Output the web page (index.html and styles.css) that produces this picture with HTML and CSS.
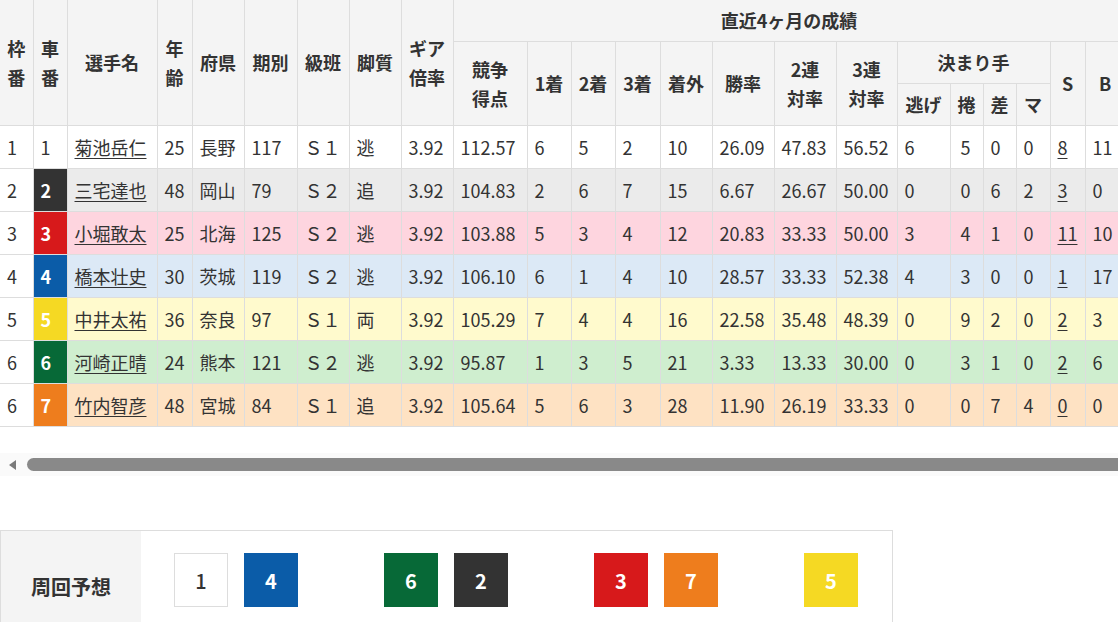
FILE: index.html
```html
<!DOCTYPE html>
<html lang="ja">
<head>
<meta charset="utf-8">
<title>出走表</title>
<link rel="stylesheet" href="styles.css">
</head>
<body>
<div class="table-wrap">
<table class="entry">
<colgroup>
<col class="w33"><col class="w34"><col class="w90"><col class="w35"><col class="w52"><col class="w53"><col class="w52"><col class="w52"><col class="w52">
<col class="w74"><col class="w44"><col class="w44"><col class="w45"><col class="w52"><col class="w62"><col class="w62"><col class="w61"><col class="w53"><col class="w33"><col class="w33"><col class="w34"><col class="w35"><col class="w40">
</colgroup>
<thead>
<tr>
<th rowspan="3">枠<br>番</th>
<th rowspan="3">車<br>番</th>
<th rowspan="3">選手名</th>
<th rowspan="3">年<br>齢</th>
<th rowspan="3">府県</th>
<th rowspan="3">期別</th>
<th rowspan="3">級班</th>
<th rowspan="3">脚質</th>
<th rowspan="3">ギア<br>倍率</th>
<th colspan="14">直近4ヶ月の成績</th>
</tr>
<tr>
<th rowspan="2">競争<br>得点</th>
<th rowspan="2">1着</th>
<th rowspan="2">2着</th>
<th rowspan="2">3着</th>
<th rowspan="2">着外</th>
<th rowspan="2">勝率</th>
<th rowspan="2">2連<br>対率</th>
<th rowspan="2">3連<br>対率</th>
<th colspan="4">決まり手</th>
<th rowspan="2">S</th>
<th rowspan="2">B</th>
</tr>
<tr>
<th>逃げ</th>
<th>捲</th>
<th>差</th>
<th>マ</th>
</tr>
</thead>
<tbody>
<tr class="row-1">
<td class="waku">1</td><td class="car car-1">1</td><td><a href="#">菊池岳仁</a></td><td>25</td><td>長野</td><td>117</td><td>Ｓ１</td><td>逃</td><td>3.92</td><td>112.57</td><td>6</td><td>5</td><td>2</td><td>10</td><td>26.09</td><td>47.83</td><td>56.52</td><td>6</td><td class="mk">5</td><td>0</td><td>0</td><td><a href="#">8</a></td><td>11</td>
</tr>
<tr class="row-2">
<td class="waku">2</td><td class="car car-2">2</td><td><a href="#">三宅達也</a></td><td>48</td><td>岡山</td><td>79</td><td>Ｓ２</td><td>追</td><td>3.92</td><td>104.83</td><td>2</td><td>6</td><td>7</td><td>15</td><td>6.67</td><td>26.67</td><td>50.00</td><td>0</td><td class="mk">0</td><td>6</td><td>2</td><td><a href="#">3</a></td><td>0</td>
</tr>
<tr class="row-3">
<td class="waku">3</td><td class="car car-3">3</td><td><a href="#">小堀敢太</a></td><td>25</td><td>北海</td><td>125</td><td>Ｓ２</td><td>逃</td><td>3.92</td><td>103.88</td><td>5</td><td>3</td><td>4</td><td>12</td><td>20.83</td><td>33.33</td><td>50.00</td><td>3</td><td class="mk">4</td><td>1</td><td>0</td><td><a href="#">11</a></td><td>10</td>
</tr>
<tr class="row-4">
<td class="waku">4</td><td class="car car-4">4</td><td><a href="#">橋本壮史</a></td><td>30</td><td>茨城</td><td>119</td><td>Ｓ２</td><td>逃</td><td>3.92</td><td>106.10</td><td>6</td><td>1</td><td>4</td><td>10</td><td>28.57</td><td>33.33</td><td>52.38</td><td>4</td><td class="mk">3</td><td>0</td><td>0</td><td><a href="#">1</a></td><td>17</td>
</tr>
<tr class="row-5">
<td class="waku">5</td><td class="car car-5">5</td><td><a href="#">中井太祐</a></td><td>36</td><td>奈良</td><td>97</td><td>Ｓ１</td><td>両</td><td>3.92</td><td>105.29</td><td>7</td><td>4</td><td>4</td><td>16</td><td>22.58</td><td>35.48</td><td>48.39</td><td>0</td><td class="mk">9</td><td>2</td><td>0</td><td><a href="#">2</a></td><td>3</td>
</tr>
<tr class="row-6">
<td class="waku">6</td><td class="car car-6">6</td><td><a href="#">河崎正晴</a></td><td>24</td><td>熊本</td><td>121</td><td>Ｓ２</td><td>逃</td><td>3.92</td><td>95.87</td><td>1</td><td>3</td><td>5</td><td>21</td><td>3.33</td><td>13.33</td><td>30.00</td><td>0</td><td class="mk">3</td><td>1</td><td>0</td><td><a href="#">2</a></td><td>6</td>
</tr>
<tr class="row-7">
<td class="waku">6</td><td class="car car-7">7</td><td><a href="#">竹内智彦</a></td><td>48</td><td>宮城</td><td>84</td><td>Ｓ１</td><td>追</td><td>3.92</td><td>105.64</td><td>5</td><td>6</td><td>3</td><td>28</td><td>11.90</td><td>26.19</td><td>33.33</td><td>0</td><td class="mk">0</td><td>7</td><td>4</td><td><a href="#">0</a></td><td>0</td>
</tr>
</tbody>
</table>
</div>

<div class="scrollbar" aria-hidden="true">
<span class="scroll-arrow"></span>
<span class="scroll-thumb"></span>
</div>

<div class="forecast">
<div class="forecast-label">周回予想</div>
<div class="forecast-boxes">
<span class="fbox fbox-1">1</span>
<span class="fbox fbox-4">4</span>
<span class="fbox fbox-empty"></span>
<span class="fbox fbox-6">6</span>
<span class="fbox fbox-2">2</span>
<span class="fbox fbox-empty"></span>
<span class="fbox fbox-3">3</span>
<span class="fbox fbox-7">7</span>
<span class="fbox fbox-empty"></span>
<span class="fbox fbox-5">5</span>
</div>
</div>
</body>
</html>
```

FILE: styles.css
```css
html, body {
  margin: 0;
  padding: 0;
  background: #fff;
  overflow: hidden;
}

body {
  font-family: "Noto Sans CJK JP", "Noto Sans", sans-serif;
  color: #333;
  font-size: 18px;
}

.table-wrap {
  width: 100%;
  overflow: hidden;
}

.entry {
  border-collapse: collapse;
  table-layout: fixed;
  width: 1125px;
}

.w33 { width: 33px; }
.w34 { width: 34px; }
.w35 { width: 35px; }
.w40 { width: 40px; }
.w44 { width: 44px; }
.w45 { width: 45px; }
.w52 { width: 52px; }
.w53 { width: 53px; }
.w61 { width: 61px; }
.w62 { width: 62px; }
.w74 { width: 74px; }
.w90 { width: 90px; }

.entry th,
.entry td {
  border-right: 1px solid #ddd;
  border-bottom: 1px solid #ddd;
  padding: 6px 7px;
  white-space: nowrap;
  overflow: hidden;
}

.entry th {
  background: #f4f4f4;
  font-weight: 700;
  line-height: 29px;
  text-align: center;
  vertical-align: middle;
}

.entry td {
  line-height: 30px;
  text-align: left;
  vertical-align: middle;
}

.entry td.mk {
  padding-left: 10px;
}

.entry a {
  color: #333;
  text-decoration: underline;
  text-underline-offset: 3px;
}

.row-2 td { background: #ebebeb; }
.row-3 td { background: #fed5df; }
.row-4 td { background: #dce9f6; }
.row-5 td { background: #fffacd; }
.row-6 td { background: #cfeecf; }
.row-7 td { background: #fee2c3; }

.entry td.waku { background: #fff; }

.entry td.car { font-weight: 700; color: #fff; }
.entry td.car-1 { background: #fff; color: #333; font-weight: 400; }
.entry td.car-2 { background: #333; }
.entry td.car-3 { background: #d7191b; }
.entry td.car-4 { background: #0b5ca8; }
.entry td.car-5 { background: #f5d923; }
.entry td.car-6 { background: #076937; }
.entry td.car-7 { background: #ee7d1d; }

/* horizontal scrollbar */
.scrollbar {
  margin-top: 26px;
  height: 23px;
  background: #fafafa;
  display: flex;
  align-items: center;
}

.scroll-arrow {
  width: 0;
  height: 0;
  margin-left: 9px;
  border-top: 5px solid transparent;
  border-bottom: 5px solid transparent;
  border-right: 7px solid #7a7a7a;
}

.scroll-thumb {
  flex: 1;
  height: 13px;
  margin-left: 11px;
  background: #898989;
  border-radius: 7px 0 0 7px;
}

/* forecast */
.forecast {
  margin-top: 54px;
  width: 891px;
  border: 1px solid #ddd;
  display: flex;
}

.forecast-label {
  width: 140px;
  background: #f4f4f4;
  display: flex;
  align-items: center;
  justify-content: center;
  font-weight: 700;
  font-size: 20px;
  color: #333;
}

.forecast-boxes {
  display: flex;
  gap: 16px;
  padding: 22px 33px 34px;
}

.fbox {
  box-sizing: border-box;
  width: 54px;
  height: 54px;
  display: flex;
  align-items: center;
  justify-content: center;
  font-size: 20px;
  font-weight: 700;
  color: #fff;
}

.fbox-1 { background: #fff; color: #333; border: 1px solid #ddd; font-weight: 500; }
.fbox-2 { background: #333; }
.fbox-3 { background: #d7191b; }
.fbox-4 { background: #0b5ca8; }
.fbox-5 { background: #f5d923; }
.fbox-6 { background: #076937; }
.fbox-7 { background: #ee7d1d; }
.fbox-empty { visibility: hidden; }
```
